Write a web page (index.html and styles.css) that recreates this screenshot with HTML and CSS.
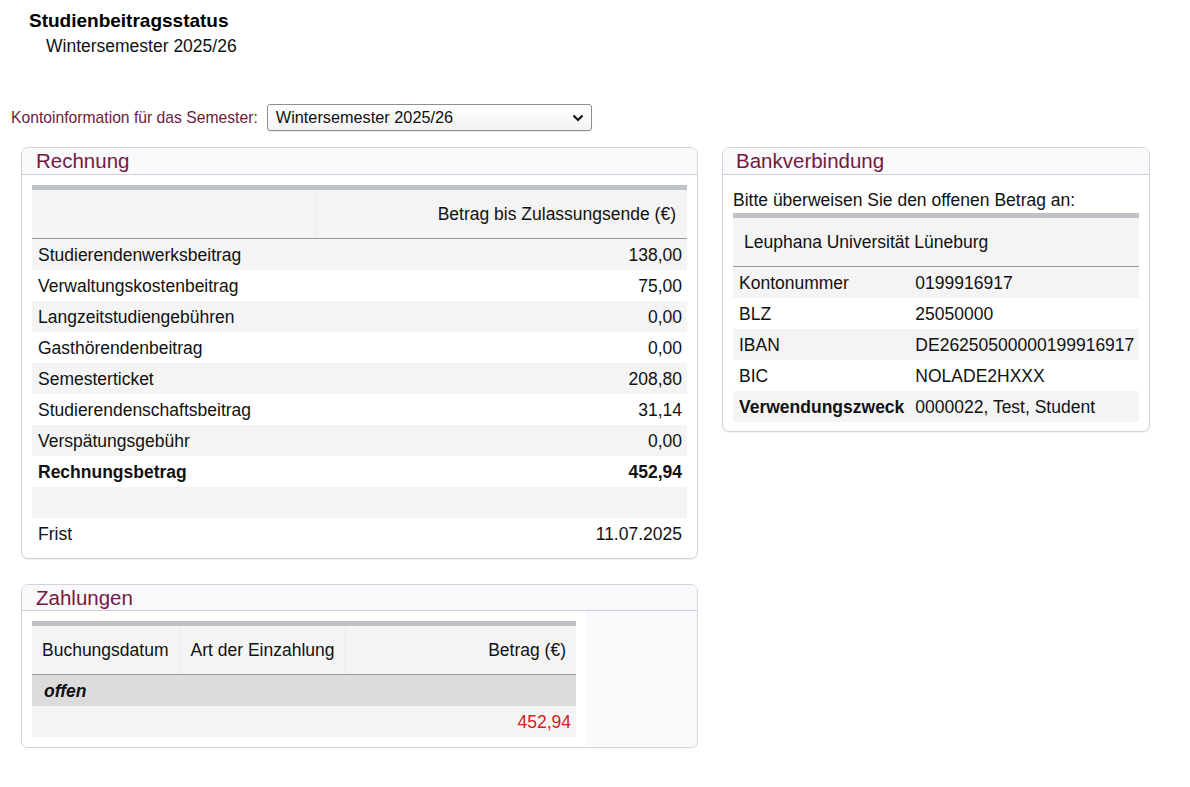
FILE: index.html
```html
<!DOCTYPE html>
<html lang="de">
<head>
<meta charset="utf-8">
<title>Studienbeitragsstatus</title>
<link rel="stylesheet" href="styles.css">
</head>
<body>
<div class="page">
  <div class="pagehead">
    <h1 class="title">Studienbeitragsstatus</h1>
    <div class="subtitle">Wintersemester 2025/26</div>
  </div>

  <div class="semrow">
    <label class="semlabel" for="sem">Kontoinformation für das Semester:</label>
    <div class="select">
      <span class="select-text">Wintersemester 2025/26</span>
      <svg class="chev" width="12" height="8" viewBox="0 0 12 8"><path d="M1.5 1.5 L6 6 L10.5 1.5" fill="none" stroke="#111" stroke-width="2.2"/></svg>
    </div>
  </div>

  <div class="columns">
    <div class="col-left">
      <section class="box">
        <div class="box-head">Rechnung</div>
        <div class="box-body">
          <table class="tbl full">
            <colgroup><col class="c-r1"><col></colgroup>
            <thead>
              <tr><th></th><th class="num sep">Betrag bis Zulassungsende (€)</th></tr>
            </thead>
            <tbody>
              <tr class="odd"><td>Studierendenwerksbeitrag</td><td class="num">138,00</td></tr>
              <tr><td>Verwaltungskostenbeitrag</td><td class="num">75,00</td></tr>
              <tr class="odd"><td>Langzeitstudiengebühren</td><td class="num">0,00</td></tr>
              <tr><td>Gasthörendenbeitrag</td><td class="num">0,00</td></tr>
              <tr class="odd"><td>Semesterticket</td><td class="num">208,80</td></tr>
              <tr><td>Studierendenschaftsbeitrag</td><td class="num">31,14</td></tr>
              <tr class="odd"><td>Verspätungsgebühr</td><td class="num">0,00</td></tr>
              <tr class="bold"><td>Rechnungsbetrag</td><td class="num">452,94</td></tr>
              <tr class="odd"><td>&nbsp;</td><td></td></tr>
              <tr><td>Frist</td><td class="num">11.07.2025</td></tr>
            </tbody>
          </table>
        </div>
      </section>

      <section class="box box-pay">
        <div class="box-head">Zahlungen</div>
        <div class="box-body tinted">
          <div class="pay-wrap">
            <table class="tbl pay">
              <colgroup><col class="c-p1"><col class="c-p2"><col class="c-p3"></colgroup>
              <thead>
                <tr><th>Buchungsdatum</th><th class="sep">Art der Einzahlung</th><th class="num sep">Betrag (€)</th></tr>
              </thead>
              <tbody>
                <tr class="group"><td colspan="3">offen</td></tr>
                <tr class="odd"><td></td><td></td><td class="num red">452,94</td></tr>
              </tbody>
            </table>
          </div>
        </div>
      </section>
    </div>

    <div class="col-right">
      <section class="box">
        <div class="box-head">Bankverbindung</div>
        <div class="box-body">
          <p class="intro">Bitte überweisen Sie den offenen Betrag an:</p>
          <table class="tbl full bank">
            <colgroup><col class="c-b1"><col></colgroup>
            <thead>
              <tr><th colspan="2">Leuphana Universität Lüneburg</th></tr>
            </thead>
            <tbody>
              <tr class="odd"><td>Kontonummer</td><td>0199916917</td></tr>
              <tr><td>BLZ</td><td>25050000</td></tr>
              <tr class="odd"><td>IBAN</td><td>DE26250500000199916917</td></tr>
              <tr><td>BIC</td><td>NOLADE2HXXX</td></tr>
              <tr class="odd"><td class="b">Verwendungszweck</td><td>0000022, Test, Student</td></tr>
            </tbody>
          </table>
        </div>
      </section>
    </div>
  </div>
</div>
</body>
</html>
```

FILE: styles.css
```css
html, body {
  margin: 0;
  padding: 0;
  background: #ffffff;
}

body {
  font-family: "Liberation Sans", Arial, sans-serif;
  color: #111111;
  font-size: 17.5px;
}

.page {
  padding: 9px 0 0 0;
}

.pagehead {
  padding-left: 29px;
}

.title {
  margin: 0;
  font-size: 19px;
  line-height: 23px;
  font-weight: bold;
  color: #000;
}

.subtitle {
  padding-left: 17px;
  font-size: 17.5px;
  line-height: 20px;
  margin-top: 4px;
}

.semrow {
  display: flex;
  align-items: center;
  margin-top: 48px;
  padding-left: 11px;
  gap: 9px;
}

.semlabel {
  color: #6e1a3e;
  font-size: 15.7px;
}

.select {
  height: 25px;
  border: 1px solid #8f8f8f;
  border-radius: 3px;
  background: linear-gradient(#ffffff, #f3f3f3);
  display: flex;
  align-items: center;
  justify-content: space-between;
  padding: 0 7px 0 8px;
  box-sizing: content-box;
  width: 308px;
  box-shadow: 0 1px 1px rgba(0,0,0,0.08);
}

.select-text {
  font-size: 16.3px;
}

.chev {
  display: block;
}

.columns {
  display: flex;
  align-items: flex-start;
  gap: 24px;
  padding-left: 21px;
  margin-top: 16px;
}

.col-left {
  width: 677px;
  display: flex;
  flex-direction: column;
  gap: 25px;
}

.col-right {
  width: 428px;
}

.box {
  border: 1px solid #d3d3de;
  border-radius: 7px;
  background: #ffffff;
  overflow: hidden;
  box-shadow: 0 1px 1px rgba(0,0,0,0.06);
}

.box-head {
  background: #f9f9fc;
  border-bottom: 1px solid #cdcddb;
  color: #751843;
  font-size: 20.5px;
  line-height: 26px;
  padding-left: 14px;
}

.col-right .box-head {
  padding-left: 13px;
}

.box-pay .box-head {
  line-height: 25px;
}

.box-body {
  padding: 10px 10px 9px 10px;
}

.box-body.tinted {
  background: #fafafc;
  padding: 0;
}

.pay-wrap {
  display: inline-block;
  background: #ffffff;
  padding: 10px 10px 10px 10px;
  vertical-align: top;
}

.tbl {
  border-collapse: collapse;
  border-top: 5px solid #bfc3c7;
  font-size: 17.5px;
}

.tbl.full {
  width: 100%;
}

.tbl th {
  background: #f4f4f4;
  font-weight: normal;
  height: 48px;
  line-height: 20px;
  padding: 0 11px;
  text-align: left;
  border-bottom: 1px solid #9a9a9a;
}

.tbl th.sep {
  border-left: 1px solid #e9e9e9;
}

.tbl td {
  height: 31px;
  line-height: 20px;
  padding: 0 5px 0 6px;
  white-space: nowrap;
}

.tbl tr.odd td {
  background: #f4f4f4;
}

.tbl .num {
  text-align: right;
}

.tbl tr.bold td,
.tbl td.b {
  font-weight: bold;
}

.c-r1 { width: 284px; }

.c-p1 { width: 148px; }
.c-p2 { width: 165px; }
.c-p3 { width: 231px; }

.pay th {
  padding: 0 10px;
}

.pay tr.group td {
  background: #dcdcdc;
  font-weight: bold;
  font-style: italic;
  padding-left: 12px;
}

.pay td.red {
  color: #d0201e;
}

.intro {
  margin: 5px 0 3px 0;
  line-height: 20px;
}

.c-b1 { width: 176px; }

.bank th {
  padding-left: 11px;
}
```
